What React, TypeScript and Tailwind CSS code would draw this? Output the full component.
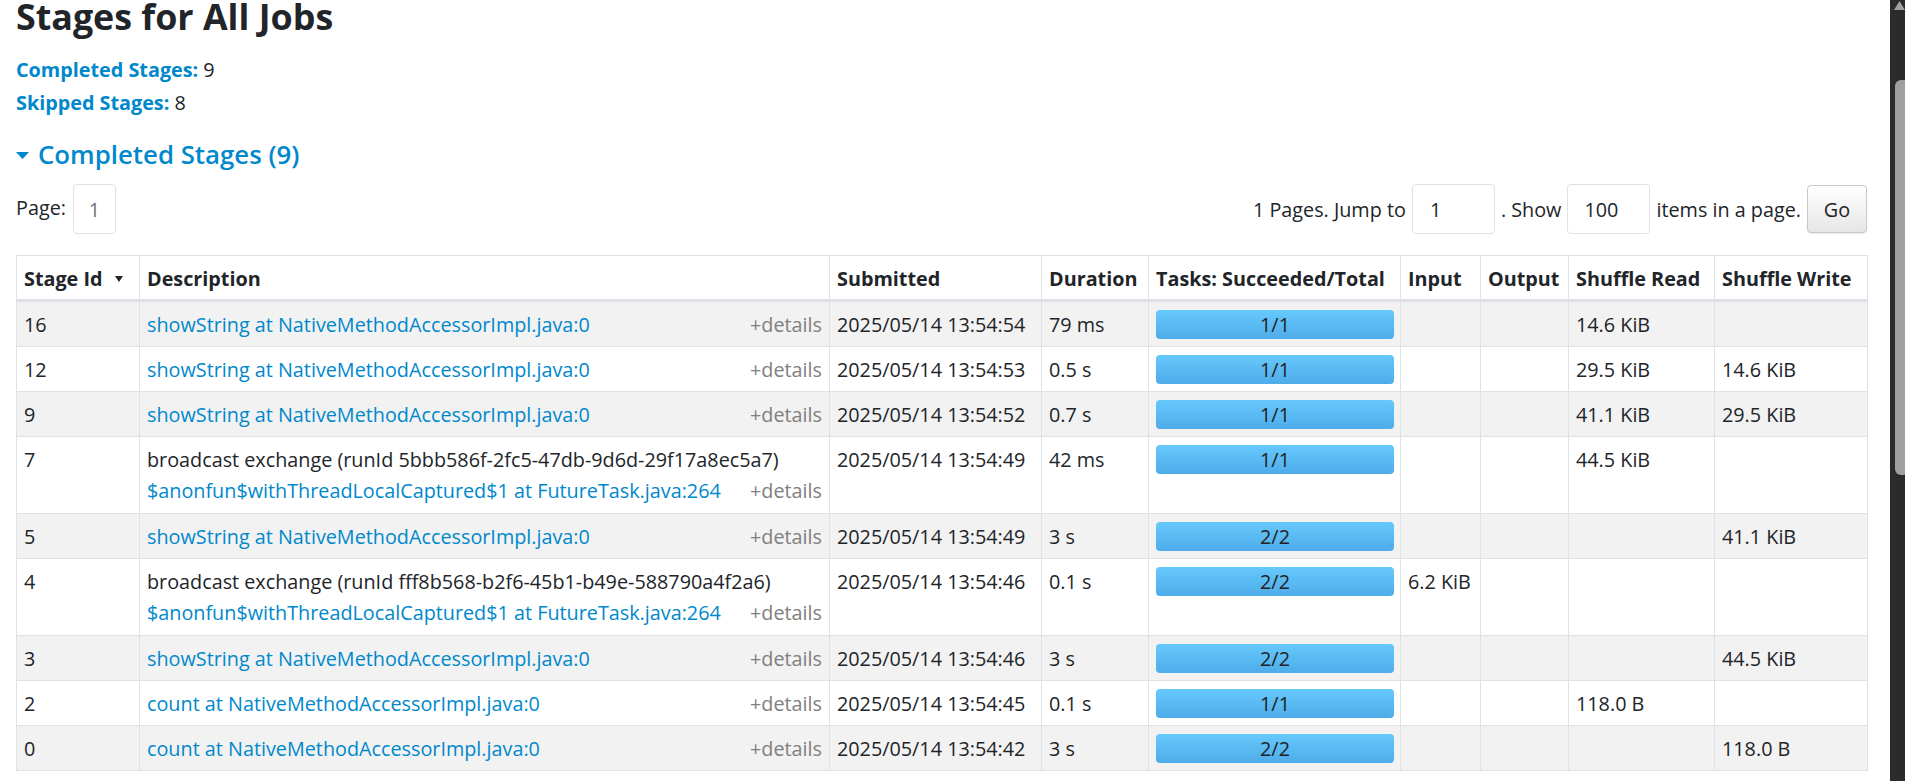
type Stage = {
  id: number
  name: string
  runId?: string
  submitted: string
  duration: string
  tasks: string
  input?: string
  shuffleRead?: string
  shuffleWrite?: string
}

const stages: Stage[] = [
  { id: 16, name: 'showString at NativeMethodAccessorImpl.java:0', submitted: '2025/05/14 13:54:54', duration: '79 ms', tasks: '1/1', shuffleRead: '14.6 KiB' },
  { id: 12, name: 'showString at NativeMethodAccessorImpl.java:0', submitted: '2025/05/14 13:54:53', duration: '0.5 s', tasks: '1/1', shuffleRead: '29.5 KiB', shuffleWrite: '14.6 KiB' },
  { id: 9, name: 'showString at NativeMethodAccessorImpl.java:0', submitted: '2025/05/14 13:54:52', duration: '0.7 s', tasks: '1/1', shuffleRead: '41.1 KiB', shuffleWrite: '29.5 KiB' },
  {
    id: 7,
    name: '$anonfun$withThreadLocalCaptured$1 at FutureTask.java:264',
    runId: '5bbb586f-2fc5-47db-9d6d-29f17a8ec5a7',
    submitted: '2025/05/14 13:54:49',
    duration: '42 ms',
    tasks: '1/1',
    shuffleRead: '44.5 KiB',
  },
  { id: 5, name: 'showString at NativeMethodAccessorImpl.java:0', submitted: '2025/05/14 13:54:49', duration: '3 s', tasks: '2/2', shuffleWrite: '41.1 KiB' },
  {
    id: 4,
    name: '$anonfun$withThreadLocalCaptured$1 at FutureTask.java:264',
    runId: 'fff8b568-b2f6-45b1-b49e-588790a4f2a6',
    submitted: '2025/05/14 13:54:46',
    duration: '0.1 s',
    tasks: '2/2',
    input: '6.2 KiB',
  },
  { id: 3, name: 'showString at NativeMethodAccessorImpl.java:0', submitted: '2025/05/14 13:54:46', duration: '3 s', tasks: '2/2', shuffleWrite: '44.5 KiB' },
  { id: 2, name: 'count at NativeMethodAccessorImpl.java:0', submitted: '2025/05/14 13:54:45', duration: '0.1 s', tasks: '1/1', shuffleRead: '118.0 B' },
  { id: 0, name: 'count at NativeMethodAccessorImpl.java:0', submitted: '2025/05/14 13:54:42', duration: '3 s', tasks: '2/2', shuffleWrite: '118.0 B' },
]

const link = 'text-[#0088cc]'
const cell = 'border border-[#dee2e6] px-[7px] pt-[9px] pb-[8px] align-top'
const head = 'border border-[#dee2e6] border-b-[3px] px-[7px] pt-[9px] pb-[7px] text-left font-bold align-top'

function Details() {
  return <span className="shrink-0 text-[#808080]">+details</span>
}

function TaskBar({ label }: { label: string }) {
  return (
    <div className="h-[29px] rounded-[4px] bg-gradient-to-b from-[#66c9fc] to-[#4eacea] text-center leading-[29px] text-[#222]">
      {label}
    </div>
  )
}

function StageRow({ s, striped }: { s: Stage; striped: boolean }) {
  return (
    <tr className={striped ? 'bg-[#f2f2f2]' : 'bg-white'}>
      <td className={cell}>{s.id}</td>
      <td className={s.runId ? 'border border-[#dee2e6] px-[7px] pt-[9px] pb-[9px] align-top' : cell}>
        {s.runId ? (
          <>
            <div>broadcast exchange (runId {s.runId})</div>
            <div className="mt-[4px] flex justify-between">
              <span className={link}>{s.name}</span>
              <Details />
            </div>
          </>
        ) : (
          <div className="flex justify-between">
            <span className={link}>{s.name}</span>
            <Details />
          </div>
        )}
      </td>
      <td className={cell}>{s.submitted}</td>
      <td className={cell}>{s.duration}</td>
      <td className="border border-[#dee2e6] pl-[7px] pr-[6px] pt-[8px] pb-0 align-top">
        <TaskBar label={s.tasks} />
      </td>
      <td className={cell}>{s.input}</td>
      <td className={cell}></td>
      <td className={cell}>{s.shuffleRead}</td>
      <td className={cell}>{s.shuffleWrite}</td>
    </tr>
  )
}

function Pagination() {
  const box = 'h-[50px] rounded-[4px] border border-[#dee2e6] bg-white'
  return (
    <div className="mt-[12px] flex items-center justify-between">
      <div className="flex items-center gap-[7px]">
        <span className="pb-[4px]">Page:</span>
        <div className={`${box} flex w-[43px] items-center justify-center text-[#6c757d]`}>1</div>
      </div>
      <div className="flex items-center gap-[6px]">
        <span>1 Pages. Jump to</span>
        <div className={`${box} flex w-[83px] items-center pl-[17px]`}>1</div>
        <span>. Show</span>
        <div className={`${box} flex w-[83px] items-center pl-[16px]`}>100</div>
        <span>items in a page.</span>
        <button className="h-[48px] w-[60px] rounded-[4px] border border-[#c8c8c8] bg-gradient-to-b from-white to-[#e6e6e6] text-[#222] shadow-[0_1px_1px_rgba(0,0,0,0.08)]">
          Go
        </button>
      </div>
    </div>
  )
}

function Scrollbar() {
  return (
    <div className="flex h-[781px] w-[15px] shrink-0 flex-col overflow-hidden bg-[#2b2b2b]">
      <svg width="15" height="12" viewBox="0 0 15 12" className="shrink-0">
        <polygon points="4,10 9.5,1 15,10" fill="#a0a0a0" />
      </svg>
      <div className="ml-[5px] mt-[68px] h-[395px] w-[14px] shrink-0 rounded-[6px] bg-[#9f9f9f]" />
    </div>
  )
}

export default function App() {
  return (
    <div className="flex h-[781px] overflow-hidden bg-white font-['Open_Sans',sans-serif] text-[19.8px] leading-[27px] text-[#212529]">
      <div className="min-w-0 flex-1 pl-[16px] pr-[23px]">
        <h3 className="text-[35.8px] font-bold leading-[32px]">Stages for All Jobs</h3>
        <ul className="mt-[23px] leading-[30px]">
          <li>
            <span className={`${link} font-bold`}>Completed Stages:</span> 9
          </li>
          <li className="mt-[3px]">
            <span className={`${link} font-bold`}>Skipped Stages:</span> 8
          </li>
        </ul>
        <h4 className={`mt-[18px] flex items-center gap-[9px] text-[25.8px] font-semibold leading-[36px] ${link}`}>
          <svg width="13" height="7" viewBox="0 0 13 7" className="mt-[3px]">
            <polygon points="0,0 13,0 6.5,7" fill="#0088cc" />
          </svg>
          Completed Stages (9)
        </h4>
        <Pagination />
        <table className="mt-[21px] w-full table-fixed border-collapse">
          <colgroup>
            <col className="w-[123px]" />
            <col className="w-[690px]" />
            <col className="w-[212px]" />
            <col className="w-[107px]" />
            <col className="w-[252px]" />
            <col className="w-[80px]" />
            <col className="w-[88px]" />
            <col className="w-[146px]" />
            <col className="w-[153px]" />
          </colgroup>
          <thead>
            <tr>
              <th className={head}>
                <span className="flex items-center gap-[12px]">
                  Stage Id
                  <svg width="8" height="6" viewBox="0 0 8 6">
                    <polygon points="0,0 8,0 4,6" fill="#212529" />
                  </svg>
                </span>
              </th>
              <th className={head}>Description</th>
              <th className={head}>Submitted</th>
              <th className={head}>Duration</th>
              <th className={head}>Tasks: Succeeded/Total</th>
              <th className={head}>Input</th>
              <th className={head}>Output</th>
              <th className={head}>Shuffle Read</th>
              <th className={head}>Shuffle Write</th>
            </tr>
          </thead>
          <tbody>
            {stages.map((s, i) => (
              <StageRow key={s.id} s={s} striped={i % 2 === 0} />
            ))}
          </tbody>
        </table>
      </div>
      <Scrollbar />
    </div>
  )
}
